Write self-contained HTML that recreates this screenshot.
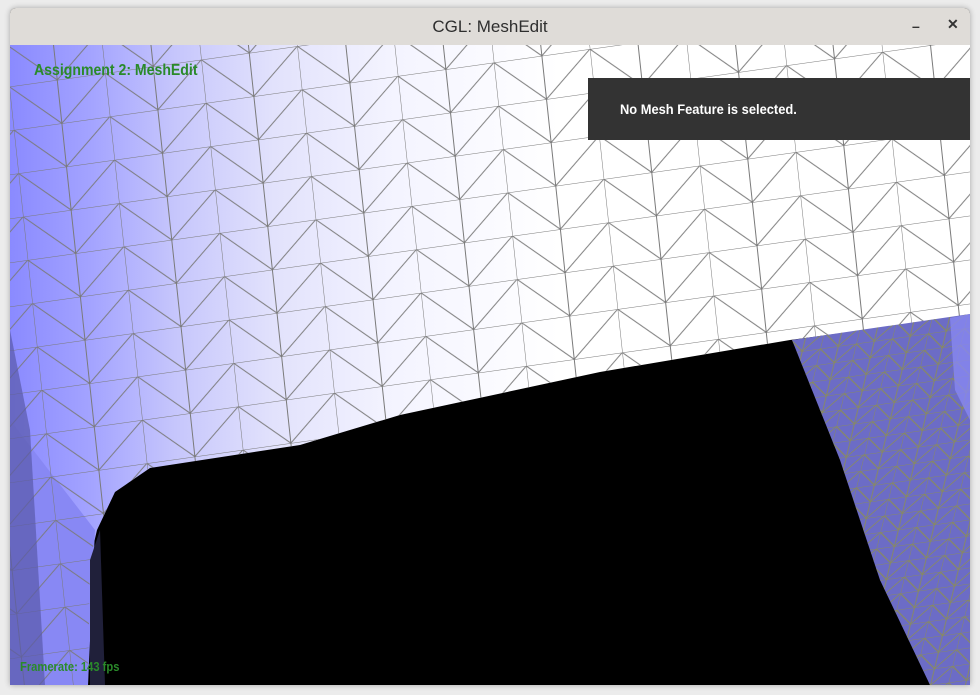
<!DOCTYPE html>
<html><head><style>
html,body{margin:0;padding:0;width:980px;height:695px;overflow:hidden;background:#ececec;font-family:"Liberation Sans",sans-serif}
.win{position:absolute;left:10px;top:8px;width:960px;height:677px;background:#000;border-radius:6px 6px 0 0;overflow:hidden;box-shadow:0 0 6px rgba(0,0,0,.3)}
.tb{position:absolute;left:0;top:0;width:960px;height:37px;background:#dfdcd8;border-bottom:1px solid #c8c4c0}
.tt{position:absolute;left:0;width:960px;top:9px;text-align:center;font-size:17px;color:#2e2e2e}
.b{position:absolute;top:8px;font-size:14px;font-weight:bold;color:#333}
svg{position:absolute;left:0;top:37px}
.g{position:absolute;color:#2a8a2a;font-weight:bold;transform-origin:0 0;white-space:nowrap}
.ov{position:absolute;left:578px;top:70px;width:382px;height:62px;background:#333}
.ov span{position:absolute;left:32px;top:23px;color:#fff;font-weight:bold;font-size:14px;transform:scaleX(.92);transform-origin:0 0;white-space:nowrap}
</style></head><body>
<div class="win">
<div class="tb"><div class="tt">CGL: MeshEdit</div><div class="b" style="left:902px;top:10px">&#8211;</div><div class="b" style="left:937px">✕</div></div>
<svg width="960" height="640" viewBox="10 45 960 640">
<defs>
<linearGradient id="lg" x1="10" x2="560" y1="0" y2="0" gradientUnits="userSpaceOnUse">
<stop offset="0" stop-color="#8a8aff"/><stop offset="0.15" stop-color="#a4a4ff"/><stop offset="0.3" stop-color="#c6c6fc"/><stop offset="0.48" stop-color="#e2e2fc"/><stop offset="0.7" stop-color="#f4f4ff"/><stop offset="1" stop-color="#ffffff"/>
</linearGradient>
<pattern id="p" width="96" height="44" patternUnits="userSpaceOnUse" patternTransform="skewY(-8) skewX(6)">
<path d="M0 0H96M0 0V44M48 0V44M0 0L48 44M96 0L48 44" stroke="#7a7a7a" stroke-width="1" fill="none"/>
</pattern>
<pattern id="p2" width="36" height="16" patternUnits="userSpaceOnUse" patternTransform="skewY(-8) skewX(-14)">
<path d="M0 0H36M0 0V16M18 0V16M0 0L18 16M36 0L18 16" stroke="#888a60" stroke-width="1" fill="none"/>
</pattern>
</defs>
<rect x="10" y="45" width="960" height="640" fill="#000"/>
<path d="M10 45H970V316L790 340L600 372L400 415L300 445L150 468L115 492L97 530L90 560L88 685H10Z" fill="url(#lg)"/>
<path d="M10 420L95 530L88 685H10Z" fill="#8888f4"/>
<path d="M10 45H970V316L790 340L600 372L400 415L300 445L150 468L115 492L97 530L90 560L88 685H10Z" fill="url(#p)"/>
<path d="M10 330L30 430L45 685H10Z" fill="#5a5aaa" opacity=".7"/>
<path d="M90 560L100 530L105 685H90Z" fill="#20203a"/>
<path d="M792 340L970 314V685H930L880 580L840 460Z" fill="#6c6cc6"/>
<path d="M792 340L970 314V685H930L880 580L840 460Z" fill="url(#p2)"/>
<path d="M950 318L970 314V420L955 390Z" fill="#8888f0" opacity=".8"/>
</svg>
<div class="g" style="left:24px;top:54px;font-size:16px;transform:scaleX(.88)">Assignment 2: MeshEdit</div>
<div class="ov"><span>No Mesh Feature is selected.</span></div>
<div class="g" style="left:10px;top:651px;font-size:13px;transform:scaleX(.86)">Framerate: 143 fps</div>
</div>
</body></html>
